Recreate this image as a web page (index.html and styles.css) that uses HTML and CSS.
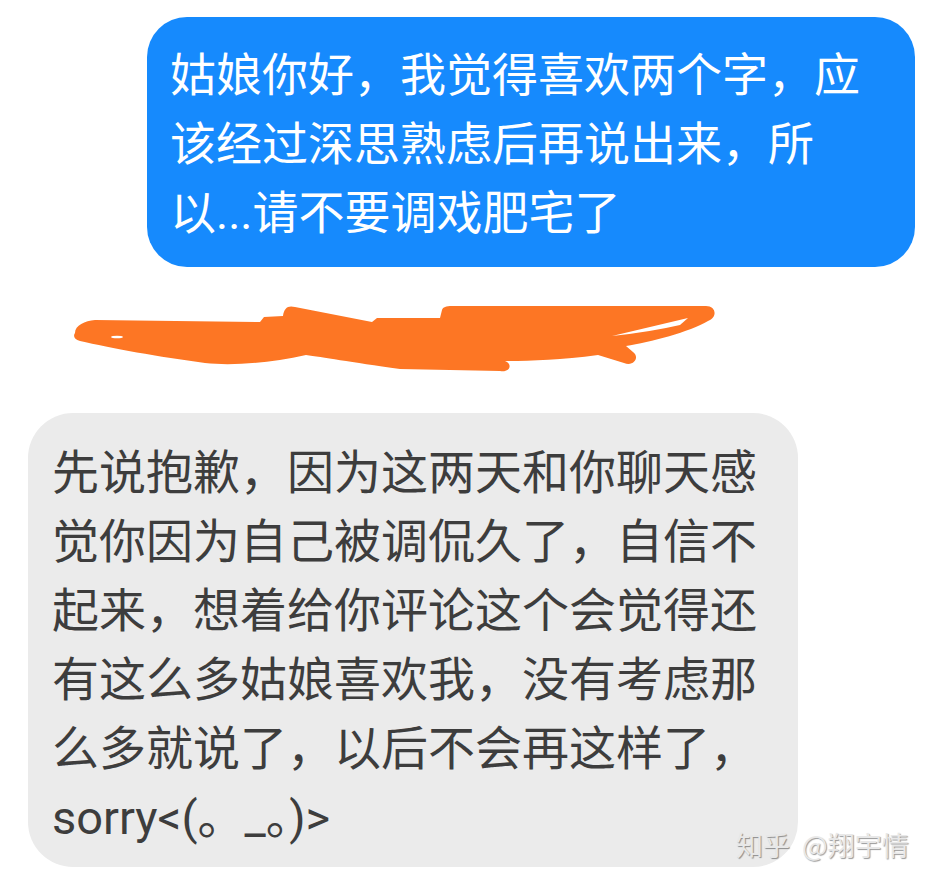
FILE: index.html
```html
<!DOCTYPE html>
<html lang="zh-CN">
<head>
  <meta charset="UTF-8">
  <meta name="viewport" content="width=device-width, initial-scale=1.0">
  <title>聊天记录</title>
  <link rel="stylesheet" href="styles.css">
</head>
<body>

<div class="page">
  <div class="row row-out">
    <div class="bubble bubble-out">姑娘你好，我觉得喜欢两个字，应该经过深思熟虑后再说出来，所以...请不要调戏肥宅了</div>
  </div>

  <div class="scribble">
    <svg width="939" height="146" viewBox="0 267 939 146">
      <path fill="#fd7624" d="M75 333 C75 325 85 321 95 320 L260 322 L264 317 L283 316 C284 308 288 305 295 307 L372 322 L377 318 L440 318 L442 310 C443 307 446 306 452 306 L706 306 C716 306 718 317 708 321 C690 332 650 342 626 346 L633 352 C640 357 634 367 624 363 L598 355 C560 360 530 361 505 361 C513 364 510 373 500 371 L400 369 C350 362 322 357 306 355 C270 363 232 366 205 363 C160 357 110 348 80 341 C74 339 73 336 75 333 Z"/>
      <path fill="#fff" d="M612 336 L688 318 L680 325 Q650 332 612 336 Z"/>
      <ellipse fill="#fff" cx="117" cy="337" rx="6" ry="1.3"/>
    </svg>
  </div>

  <div class="row row-in">
    <div class="bubble bubble-in">先说抱歉，因为这两天和你聊天感觉你因为自己被调侃久了，自信不起来，想着给你评论这个会觉得还有这么多姑娘喜欢我，没有考虑那么多就说了，以后不会再这样了，sorry&lt;(。_。)&gt;</div>
  </div>

  <div class="watermark">知乎  @翔宇情</div>
</div>

</body>
</html>
```

FILE: styles.css
```css
body {
  margin: 0;
  padding: 0;
  background-color: #fff;
  font-family: Roboto, "Noto Sans CJK SC", sans-serif;
}

.page {
  position: relative;
  width: 939px;
  height: 885px;
  overflow: hidden;
}

.row {
  display: flex;
}

.row-out {
  justify-content: flex-end;
  padding: 17px 24px 0 0;
}

.row-in {
  justify-content: flex-start;
  padding-left: 28px;
}

.bubble {
  line-height: 69px;
}

.bubble-out {
  width: 702px;
  padding: 24px 43px 19px 23px;
  font-size: 46px;
  background-color: #168afd;
  color: #fff;
  border-radius: 40px;
}

.bubble-in {
  width: 722px;
  padding: 25px 24px 15px 24px;
  font-size: 47px;
  background-color: #ebebeb;
  color: #3d3d3d;
  border-radius: 45px;
}

.scribble {
  height: 146px;
}

.scribble svg {
  display: block;
}

.watermark {
  position: absolute;
  left: 736px;
  top: 825px;
  font-family: "Noto Sans CJK SC", sans-serif;
  font-size: 27px;
  color: #e8e8e8;
  text-shadow: 1px 1px 1px rgba(0, 0, 0, 0.4);
  white-space: pre;
}
```
